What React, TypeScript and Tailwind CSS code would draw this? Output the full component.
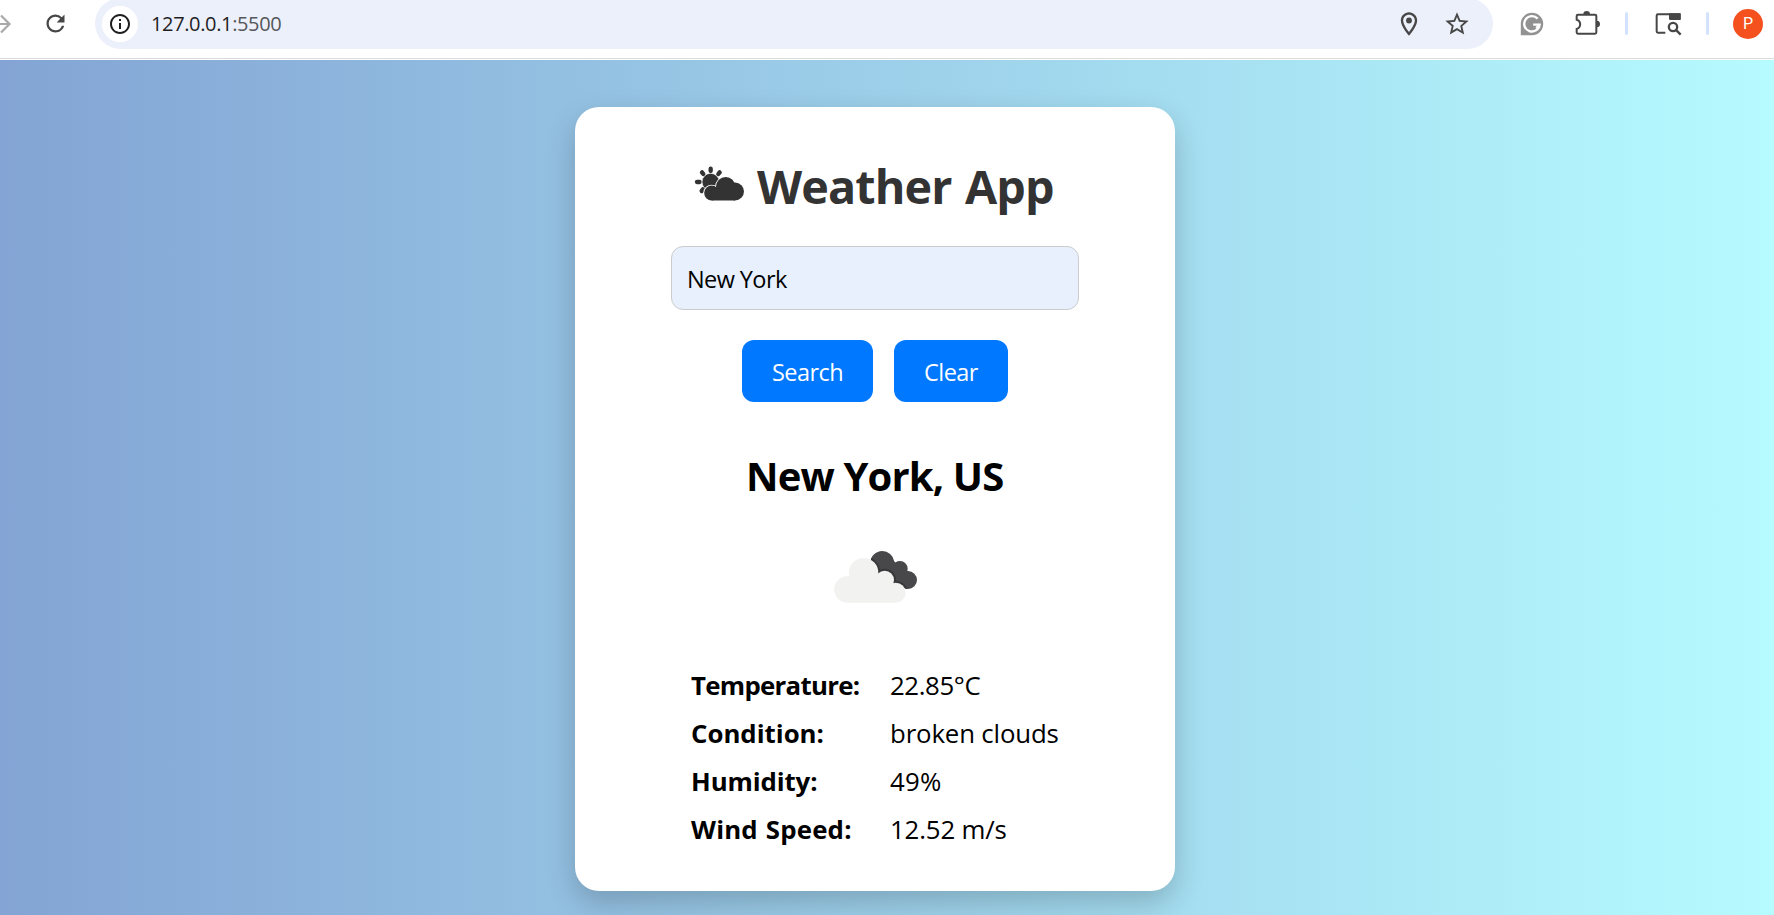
import { MdRefresh, MdInfoOutline, MdOutlineLocationOn, MdStarBorder } from "react-icons/md";

const details = [
  { label: "Temperature:", labelClass: "tracking-[-0.7px]", value: "22.85°C", valueClass: "tracking-[-0.4px]" },
  { label: "Condition:", labelClass: "tracking-normal", value: "broken clouds", valueClass: "tracking-[-0.15px]" },
  { label: "Humidity:", labelClass: "tracking-[-0.1px]", value: "49%", valueClass: "tracking-[0.3px]" },
  { label: "Wind Speed:", labelClass: "tracking-[0.2px] [word-spacing:1px]", value: "12.52 m/s", valueClass: "tracking-[-0.15px]" },
];

function ForwardIcon() {
  return (
    <svg width="12" height="24" viewBox="0 0 12 24" fill="none" stroke="#a9a9a9" strokeWidth="2.2" className="shrink-0">
      <path d="M-6 12H9.5M1 3.5L9.5 12L1 20.5" />
    </svg>
  );
}

function GrammarlyIcon() {
  return (
    <svg width="24" height="24" viewBox="0 0 24 24" className="ml-[27px] shrink-0">
      <path d="M12 .8A11.2 11.2 0 1 1 12 23.2H.8V12A11.2 11.2 0 0 1 12 .8Z" fill="#929292" />
      <path d="M17.6 6.6A7.7 7.7 0 1 0 19.6 12.6H13.2" fill="none" stroke="#fff" strokeWidth="2.4" />
      <path d="M16.2 16.2L19.4 12.2" fill="none" stroke="#fff" strokeWidth="2" />
    </svg>
  );
}

function PuzzleIcon() {
  return (
    <svg width="30" height="30" viewBox="190 26 90 90" className="ml-[29px] shrink-0">
      <path
        d="M205 43H256Q260 43 260 47V96Q260 100 256 100H205Q201 100 201 96V86C215 82 215 62 201 58V47Q201 43 205 43Z"
        fill="none"
        stroke="#474747"
        strokeWidth="6"
      />
      <path d="M221 42A10 10 0 0 1 241 42ZM261 61A10 10 0 0 1 261 81Z" fill="#474747" />
    </svg>
  );
}

function TabSearchIcon() {
  return (
    <svg width="30" height="25" viewBox="42 36 90 75" className="ml-[26px] shrink-0">
      <path d="M76 101H54Q50 101 50 97V50Q50 46 54 46H119V60" fill="none" stroke="#474747" strokeWidth="6" />
      <path d="M87 43H118Q122 43 122 47V63H91Q87 63 87 59Z" fill="#474747" />
      <circle cx="99" cy="84" r="12.500" fill="none" stroke="#474747" strokeWidth="7" />
      <path d="M107 92L122 107" stroke="#474747" strokeWidth="7" />
    </svg>
  );
}

function SunCloudIcon() {
  return (
    <svg width="64" height="60" viewBox="0 0 192 180" className="mt-px shrink-0">
      <g fill="none" stroke="#333" strokeWidth="13" strokeLinecap="round">
        <path d="M62 41V48M36 52L40 57M89 52L85 57M21 81H29M35 108L40 102" />
      </g>
      <circle cx="62" cy="81" r="26" fill="#333" stroke="#fff" strokeWidth="2" />
      <g fill="#333" stroke="#fff" strokeWidth="5">
        <circle cx="65" cy="114" r="22.500" />
        <circle cx="107" cy="95" r="29" />
        <circle cx="135" cy="109.500" r="27" />
      </g>
      <g fill="#333">
        <circle cx="65" cy="114" r="22.500" />
        <circle cx="107" cy="95" r="29" />
        <circle cx="135" cy="109.500" r="27" />
        <path d="M65 100H135V136.500H65Z" />
      </g>
    </svg>
  );
}

function BrokenCloudsIcon() {
  return (
    <svg width="84" height="54" viewBox="342 359 252 162" className="ml-[259px] mt-[46px]">
      <defs>
        <clipPath id="dark-cloud">
          <circle cx="487" cy="398" r="36" />
          <circle cx="540" cy="415" r="23" />
          <circle cx="564" cy="449" r="27" />
          <path d="M470 425L515 385L570 440L560 476L520 460Z" />
        </clipPath>
      </defs>
      <g clipPath="url(#dark-cloud)">
        <path d="M440 355H600V480H440Z" fill="#48484a" />
        <g fill="#38383a">
          <circle cx="431" cy="427" r="50" />
          <circle cx="494" cy="449" r="34" />
          <circle cx="527" cy="487" r="36" />
        </g>
      </g>
      <g fill="#f2f2f1">
        <circle cx="382" cy="477" r="39.500" />
        <circle cx="431" cy="427" r="44" />
        <circle cx="494" cy="449" r="28" />
        <circle cx="527" cy="487" r="30" />
        <path d="M382 440L431 427L494 440L527 480V517H382Z" />
      </g>
    </svg>
  );
}

export default function App() {
  return (
    <div className="flex h-[915px] w-[1774px] flex-col overflow-hidden bg-white font-['Open_Sans',sans-serif]">
      <header className="h-[59px] shrink-0 border-b border-[#dcdcdc]">
        <div className="flex h-[47px] items-center">
          <ForwardIcon />
          <MdRefresh size={27} color="#474747" className="ml-[30px] shrink-0" />
          <div className="ml-[26px] flex h-[51px] w-[1398px] shrink-0 items-center rounded-full bg-[#ecf0fa] pr-[22px] pl-[7px]">
            <span className="flex size-9 items-center justify-center rounded-full bg-white">
              <MdInfoOutline size={24} color="#1f1f1f" />
            </span>
            <span className="ml-[13px] text-[20px] tracking-[-0.36px] text-[#1f1f1f]">
              127.0.0.1<span className="text-[#55575b]">:5500</span>
            </span>
            <MdOutlineLocationOn size={28} color="#474747" className="ml-auto" />
            <MdStarBorder size={28} color="#474747" className="ml-5" />
          </div>
          <GrammarlyIcon />
          <PuzzleIcon />
          <span className="ml-[22px] h-[23px] w-[3px] rounded-full bg-[#d3e3fd]" />
          <TabSearchIcon />
          <span className="ml-[22px] h-[23px] w-[3px] rounded-full bg-[#d3e3fd]" />
          <span className="ml-[24px] flex size-[30px] items-center justify-center rounded-full bg-[#f4511e] font-['Roboto'] text-[16px] text-white">
            P
          </span>
        </div>
      </header>

      <main className="mt-px flex flex-1 justify-center overflow-hidden bg-linear-[90deg,#83a4d4,#b6fbff] pt-[47px] pr-6">
        <section className="h-[784px] w-[600px] shrink-0 rounded-[24px] bg-white shadow-[0_12px_30px_rgba(0,0,0,0.2)]">
          <h1 className="flex h-[139px] pt-[47px] pl-[115px] text-[46.7px] leading-[64px] font-bold tracking-[-0.85px] whitespace-nowrap text-[#333] [word-spacing:2px]">
            <SunCloudIcon />
            <span className="ml-[3px]">Weather App</span>
          </h1>
          <input
            defaultValue="New York"
            className="mx-auto block h-16 w-[408px] rounded-xl border border-[#ccc] bg-[#e8f0fe] px-[15px] pt-[2px] text-[23.5px] tracking-[-0.6px] text-black outline-none"
          />
          <div className="mt-[30px] flex justify-center gap-[21px] text-[23.5px] tracking-[-0.55px] text-white">
            <button className="h-[62px] w-[131px] rounded-xl bg-[#0078ff] pt-[4px]">Search</button>
            <button className="h-[62px] w-[114px] rounded-xl bg-[#0078ff] pt-[4px]">Clear</button>
          </div>
          <h2 className="mt-[46px] pl-[171px] text-[40px] leading-[56px] font-bold tracking-[-0.85px] whitespace-nowrap text-black">
            New York, US
          </h2>
          <BrokenCloudsIcon />
          <dl className="mt-[57px] ml-[116px] text-[25.8px] leading-[48px] text-black">
            {details.map((d) => (
              <div key={d.label} className="flex whitespace-nowrap">
                <dt className={`w-[199px] font-bold ${d.labelClass}`}>{d.label}</dt>
                <dd className={d.valueClass}>{d.value}</dd>
              </div>
            ))}
          </dl>
        </section>
      </main>
    </div>
  );
}
